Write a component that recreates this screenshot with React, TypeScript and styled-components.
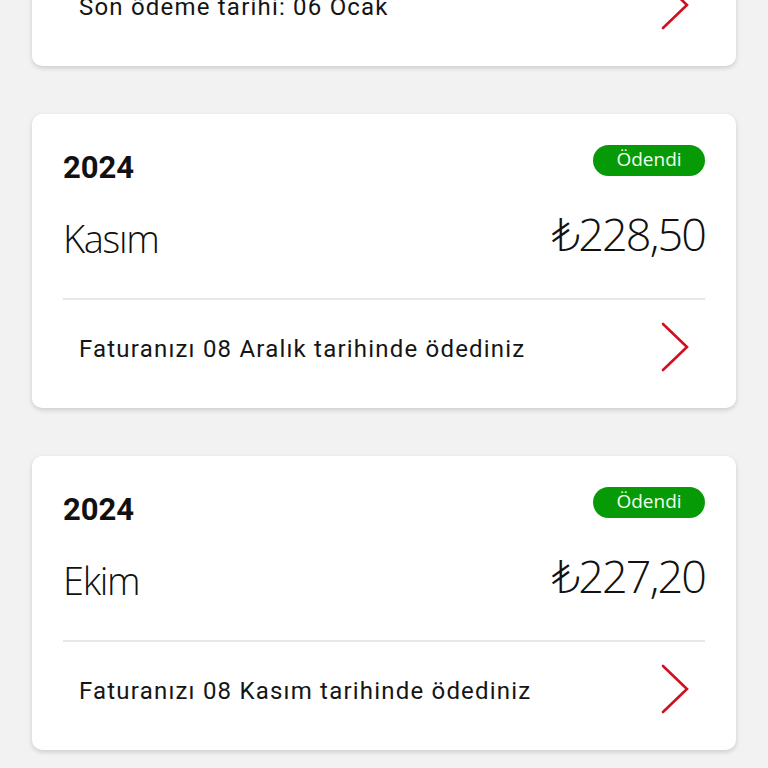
import React from "react";
import styled, { createGlobalStyle } from "styled-components";

const Global = createGlobalStyle`
  html, body { margin: 0; padding: 0; background: #f2f2f2; }
  body { font-family: Roboto, "Noto Sans", sans-serif; overflow: hidden; }
`;

const Page = styled.div`
  width: 768px;
  height: 768px;
  overflow: hidden;
  background: #f2f2f2;
`;

const List = styled.div`
  display: flex;
  flex-direction: column;
  gap: 48px;
  padding: 0 32px;
  margin-top: -228px;
`;

const Card = styled.div`
  background: #fff;
  border-radius: 10px;
  height: 294px;
  box-sizing: border-box;
  padding: 31px 31px 0 31px;
  box-shadow: 0 2px 5px rgba(0, 0, 0, 0.16);
  display: flex;
  flex-direction: column;
`;

const TopRow = styled.div`
  display: flex;
  justify-content: space-between;
  align-items: flex-start;
  height: 42px;
`;

const Year = styled.div`
  font-family: Roboto, sans-serif;
  font-weight: 700;
  font-size: 31px;
  line-height: 31px;
  color: #111;
  margin-top: 7px;
`;

const Badge = styled.div<{ $bg: string }>`
  background: ${(p) => p.$bg};
  color: #f2fff2;
  border-radius: 16px;
  height: 31px;
  width: 112px;
  display: flex;
  align-items: center;
  justify-content: center;
  font-family: "Open Sans", sans-serif;
  font-weight: 400;
  font-size: 19px;
  line-height: 1;
  box-sizing: border-box;
  padding-bottom: 3px;
`;

const MidRow = styled.div`
  display: flex;
  justify-content: space-between;
  align-items: flex-end;
  height: 113px;
  border-bottom: 2px solid #e8e8e8;
  box-sizing: border-box;
  padding-bottom: 41px;
`;

const Month = styled.div`
  font-family: "Open Sans", sans-serif;
  font-weight: 300;
  font-stretch: 90%;
  font-size: 38px;
  line-height: 38px;
  letter-spacing: -1.3px;
  color: #111;
`;

const Amount = styled.div`
  font-family: "Open Sans", "DejaVu Sans", sans-serif;
  font-weight: 300;
  font-stretch: 90%;
  font-size: 45px;
  line-height: 45px;
  color: #111;
  letter-spacing: -1.9px;
  margin-bottom: 1px;
`;

const BottomRow = styled.div`
  display: flex;
  align-items: center;
  justify-content: space-between;
  height: 94px;
  padding: 0 15px 0 16px;
`;

const RowText = styled.div`
  font-family: Roboto, sans-serif;
  font-size: 24px;
  color: #151515;
  letter-spacing: 1.2px;
  margin-top: 3px;
`;

const Chevron = () => (
  <svg width="30" height="50" viewBox="0 0 30 50" fill="none">
    <path d="M3 2 L27 25 L3 48" stroke="#d0101e" strokeWidth="2.6" strokeLinecap="round" strokeLinejoin="miter" />
  </svg>
);

type Bill = { year: string; month: string; amount: string; status: string; color: string; note: string };

const bills: Bill[] = [
  { year: "2024", month: "Aralık", amount: "₺230,10", status: "Ödenmedi", color: "#e60000", note: "Son ödeme tarihi: 06 Ocak" },
  { year: "2024", month: "Kasım", amount: "₺228,50", status: "Ödendi", color: "#079a07", note: "Faturanızı 08 Aralık tarihinde ödediniz" },
  { year: "2024", month: "Ekim", amount: "₺227,20", status: "Ödendi", color: "#079a07", note: "Faturanızı 08 Kasım tarihinde ödediniz" },
];

export default function App() {
  return (
    <Page>
      <Global />
      <List>
        {bills.map((b, i) => (
          <Card key={i}>
            <TopRow>
              <Year>{b.year}</Year>
              <Badge $bg={b.color}>{b.status}</Badge>
            </TopRow>
            <MidRow>
              <Month>{b.month}</Month>
              <Amount>{b.amount}</Amount>
            </MidRow>
            <BottomRow>
              <RowText>{b.note}</RowText>
              <Chevron />
            </BottomRow>
          </Card>
        ))}
      </List>
    </Page>
  );
}
